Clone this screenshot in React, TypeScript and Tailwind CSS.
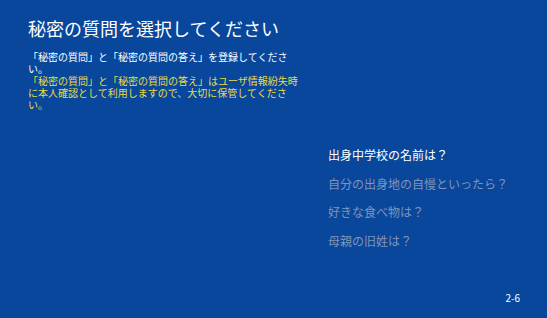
export default function App() {
  const font = { fontFamily: '"Noto Sans CJK JP", "Noto Sans", sans-serif' };
  return (
    <div className="w-[547px] h-[318px] bg-[#08479b] flex flex-col overflow-hidden" style={font}>
      <div className="pl-[28px] pt-[15px]">
        <h1 className="text-[18px] leading-[26px] text-white">秘密の質問を選択してください</h1>
        <div className="mt-[10px] w-[272px] text-[10px] leading-[12px]">
          <p className="text-white">「秘密の質問」と「秘密の質問の答え」を登録してください。</p>
          <p className="text-[#ecdc45]">「秘密の質問」と「秘密の質問の答え」はユーザ情報紛失時に本人確認として利用しますので、大切に保管してください。</p>
        </div>
      </div>
      <div className="pl-[328px] mt-[35px] flex flex-col gap-[10.5px] text-[12px] leading-[18px]">
        <div className="text-white">出身中学校の名前は？</div>
        <div className="text-[#8094b8]">自分の出身地の自慢といったら？</div>
        <div className="text-[#8094b8]">好きな食べ物は？</div>
        <div className="text-[#8094b8]">母親の旧姓は？</div>
      </div>
      <div className="flex-1" />
      <div className="flex justify-end pr-[27px] pb-[13px] text-[10px] leading-[14px] text-white">2-6</div>
    </div>
  );
}
